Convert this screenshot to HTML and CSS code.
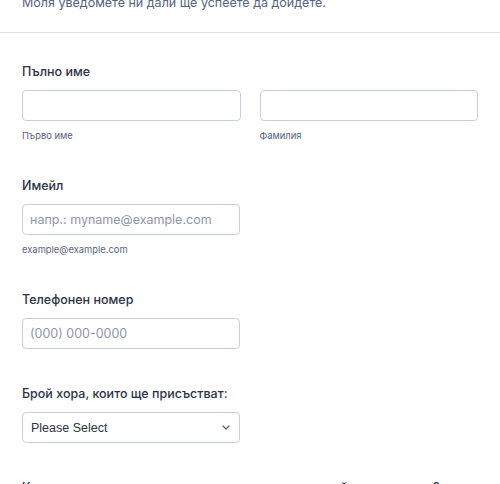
FILE: index.html
```html
<!DOCTYPE html>
<html lang="bg">
<head>
<meta charset="utf-8">
<link rel="stylesheet" href="styles.css">
</head>
<body>
<div class="page">
  <header class="form-header">
    <p class="subheader">Моля уведомете ни дали ще успеете да дойдете.</p>
  </header>
  <form class="form">
    <div class="field with-sub">
      <label class="label">Пълно име</label>
      <div class="row">
        <div class="col">
          <input class="input" type="text">
          <span class="sublabel">Първо име</span>
        </div>
        <div class="col">
          <input class="input" type="text">
          <span class="sublabel">Фамилия</span>
        </div>
      </div>
    </div>
    <div class="field with-sub">
      <label class="label">Имейл</label>
      <div class="col">
        <input class="input" type="text" placeholder="напр.: myname@example.com">
        <span class="sublabel">example@example.com</span>
      </div>
    </div>
    <div class="field">
      <label class="label">Телефонен номер</label>
      <div class="col">
        <input class="input" type="text" placeholder="(000) 000-0000">
      </div>
    </div>
    <div class="field">
      <label class="label">Брой хора, които ще присъстват:</label>
      <div class="col">
        <div class="select">
          <span>Please Select</span>
          <svg class="chev" width="8" height="5" viewBox="0 0 8 5"><path d="M1 1l3 3 3-3" fill="none" stroke="#57647e" stroke-width="1.3" stroke-linecap="round" stroke-linejoin="round"/></svg>
        </div>
      </div>
    </div>
    <div class="field">
      <label class="label">Кажете ни има ли хранителни ограничения за някой от гостите ви?</label>
    </div>
  </form>
</div>
</body>
</html>
```
FILE: styles.css
```css
* { box-sizing: border-box; }
html, body { margin: 0; padding: 0; background: #fff; overflow: hidden; }
body { font-family: Inter, "Noto Sans", sans-serif; color: #2c3345; }
.page { margin-top: -5px; }
.form-header { padding: 0 22px 21px; border-bottom: 1px solid #e3e5ee; }
.subheader { margin: 0; font-size: 12.5px; line-height: 16px; color: #57647e; }
.form { padding: 31px 22px 0; display: flex; flex-direction: column; }
.field { display: flex; flex-direction: column; padding-bottom: 37px; }
.field.with-sub { padding-bottom: 36px; }
.label { font-size: 12.5px; line-height: 16px; font-weight: 500; color: #2c3345; margin-bottom: 10px; white-space: nowrap; }
.row { display: flex; gap: 19px; }
.col { display: flex; flex-direction: column; width: 218px; }
.row .col { width: 219px; }
.input, .select {
  height: 31px; width: 100%;
  border: 1px solid #c9cedb; border-radius: 4px;
  background: #fff; font-family: Inter, "Noto Sans", sans-serif;
  font-size: 12.5px; padding: 0 7px; color: #2c3345; outline: none;
}
.input::placeholder { color: #8f96a8; }
.sublabel { margin-top: 9px; font-size: 9.4px; line-height: 12px; color: #57647e; }
.select {
  display: flex; align-items: center; justify-content: space-between;
  padding: 0 9px 0 8px; font-family: "Liberation Sans", Arial, sans-serif; font-size: 12.5px; color: #2c3345;
}
.chev { width: 8px; height: 5px; }
```
